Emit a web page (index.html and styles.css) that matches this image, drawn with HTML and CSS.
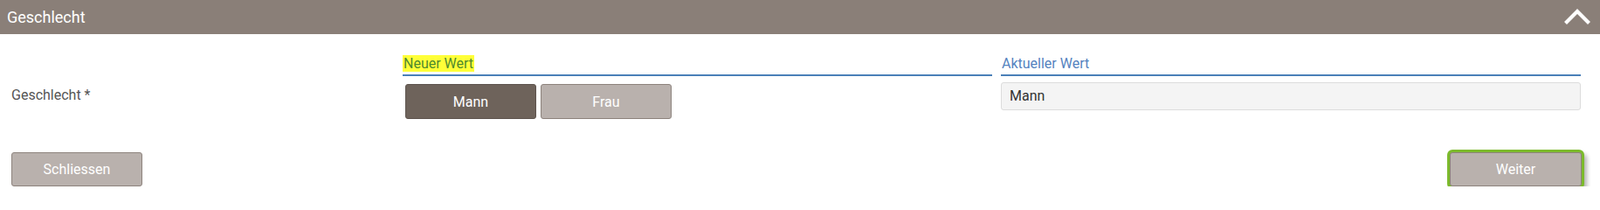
FILE: index.html
```html
<!DOCTYPE html>
<html lang="de">
<head>
<meta charset="utf-8">
<title>Geschlecht</title>
<link rel="stylesheet" href="styles.css">
</head>
<body>
<div class="panel">
  <div class="header">
    <span class="title">Geschlecht</span>
    <svg class="chevron" width="32" height="20" viewBox="0 0 32 20" aria-hidden="true">
      <polyline points="2.5,17.5 16,4 29.5,17.5" fill="none" stroke="#ffffff" stroke-width="4.2" stroke-linecap="butt" stroke-linejoin="miter"/>
    </svg>
  </div>
  <div class="form-row">
    <div class="label">Geschlecht *</div>
    <div class="col col-new">
      <div class="col-head"><span class="hl">Neuer Wert</span></div>
      <div class="choices">
        <button class="choice active">Mann</button>
        <button class="choice">Frau</button>
      </div>
    </div>
    <div class="col col-current">
      <div class="col-head blue">Aktueller Wert</div>
      <div class="current">Mann</div>
    </div>
  </div>
  <div class="footer">
    <button class="btn">Schliessen</button>
    <button class="btn focused">Weiter</button>
  </div>
</div>
</body>
</html>
```
FILE: styles.css
```css
* { box-sizing: border-box; }
html, body { margin: 0; padding: 0; background: #ffffff; }
body { font-family: Roboto, "Liberation Sans", Arial, sans-serif; font-size: 16px; }

.header {
  height: 39px;
  background: #8a7f78;
  display: flex;
  align-items: center;
  justify-content: space-between;
  padding: 0 10px 0 8px;
}
.title { color: #ffffff; font-size: 18px; line-height: 21px; }
.chevron { display: block; margin-top: -2px; }

.form-row {
  display: flex;
  align-items: flex-start;
  padding: 24px 0 0 13px;
}
.label {
  width: 448px;
  padding-top: 36px;
  line-height: 19px;
  color: #555555;
}
.col-new { width: 675px; }
.col-current { width: 664px; margin-left: 10px; }

.col-head {
  line-height: 19px;
  padding-bottom: 3px;
  border-bottom: 2px solid #4a80b8;
  font-size: 16px;
}
.col-head.blue { color: #5583c0; padding-left: 1px; }
.hl { background: #ffff38; color: #4f8a2e; padding: 0 1px; display: inline-block; }

.choices { display: flex; gap: 5px; margin-top: 9px; padding-left: 3px; }
.choice {
  width: 150px;
  height: 40px;
  border: 1px solid #8d837d;
  border-radius: 3px;
  background: #b9b1ad;
  color: #ffffff;
  font-family: inherit;
  font-size: 16px;
  padding: 0;
}
.choice.active { background: #6e635b; border-color: #5e544e; }

.current {
  margin-top: 7px;
  height: 32px;
  border: 1px solid #dcdcdc;
  border-radius: 3px;
  background: #f4f4f4;
  padding: 0 9px;
  line-height: 30px;
  color: #333333;
}

.footer {
  display: flex;
  justify-content: space-between;
  margin-top: 38px;
  padding: 0 21px 0 13px;
}
.btn {
  width: 150px;
  height: 39px;
  border: 1px solid #8d837d;
  border-radius: 3px;
  background: #b9b1ad;
  color: #ffffff;
  font-family: inherit;
  font-size: 16px;
  font-weight: normal;
  padding: 0;
}
.btn.focused {
  width: 151px;
  box-shadow: 0 0 0 3px #7cba2c, 4px 4px 5px 2px rgba(0, 0, 0, 0.3);
}
```
